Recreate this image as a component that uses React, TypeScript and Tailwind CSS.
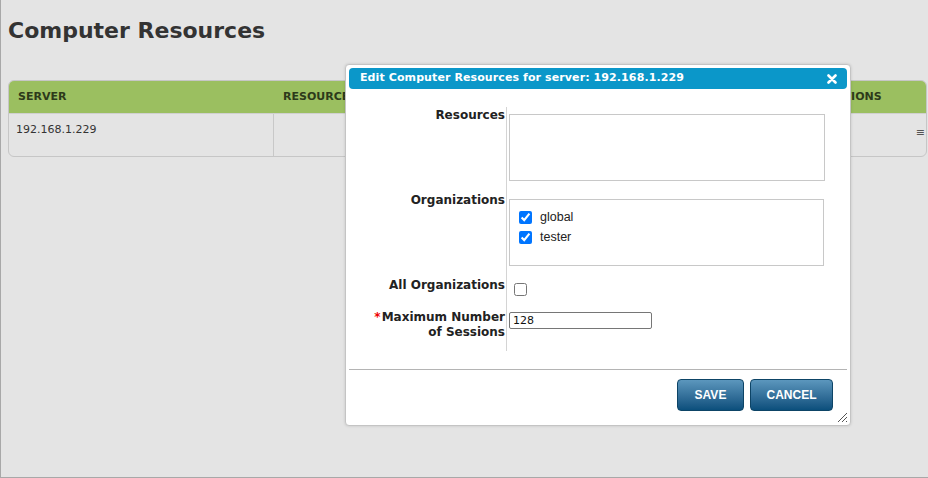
import React from "react";

const verdana = "font-['DejaVu_Sans',Verdana,sans-serif]";
const arial = "font-['Liberation_Sans',Arial,sans-serif]";

function CloseIcon() {
  return (
    <svg width="10" height="10" viewBox="0 0 10 10" className="block">
      <path d="M1.5 1.5 L8.5 8.5 M8.5 1.5 L1.5 8.5" stroke="#fff" strokeWidth="2.6" strokeLinecap="round" />
    </svg>
  );
}

function ResizeGrip() {
  return (
    <svg width="12" height="12" viewBox="0 0 12 12" className="block">
      <path d="M11 2 L2 11 M11 6 L6 11 M11 10 L10 11" stroke="#555" strokeWidth="1" />
    </svg>
  );
}

function FormRow({
  label,
  required,
  height,
  children,
}: {
  label: React.ReactNode;
  required?: boolean;
  height: string;
  children: React.ReactNode;
}) {
  return (
    <div className={`grid grid-cols-[160px_1fr] ${height}`}>
      <div className={`${verdana} text-right text-[12px] leading-[15px] font-bold text-[#222] pr-px pt-[1px]`}>
        {required && <span className="text-[#e00] mr-px">*</span>}
        {label}
      </div>
      <div className="border-l border-[#d4d4d4] pl-[2px]">{children}</div>
    </div>
  );
}

function EditDialog() {
  return (
    <div className="absolute left-[344px] top-[64px] w-[506px] h-[362px] bg-white border border-[#c4c4c4] rounded-[4px] p-[3px] shadow-[0_0_3px_rgba(0,0,0,0.15)] flex flex-col">
      <div className="h-[25px] bg-[#0b97c9] rounded-[4px] flex items-center pl-[11px] pr-[10px]">
        <span className={`${verdana} text-white text-[11px] tracking-[0.1px] font-bold flex-1`}>
          Edit Computer Resources for server: 192.168.1.229
        </span>
        <CloseIcon />
      </div>

      <div className="mt-[18px] -ml-[3px]">
        <FormRow label="Resources" height="h-[85px]">
          <div className="mt-[7px] w-[316px] h-[67px] border border-[#c8c8c8]" />
        </FormRow>
        <FormRow label="Organizations" height="h-[85px]">
          <div className="mt-[7px] w-[315px] h-[67px] border border-[#c8c8c8] pt-[7px] pl-[9px]">
            {["global", "tester"].map((o) => (
              <label key={o} className={`${arial} flex items-center h-[20px] text-[12.5px] text-[#222]`}>
                <input type="checkbox" defaultChecked className="w-[13px] h-[13px] m-0 accent-[#0075ff]" />
                <span className="ml-[8px]">{o}</span>
              </label>
            ))}
          </div>
        </FormRow>
        <FormRow label="All Organizations" height="h-[32px]">
          <input type="checkbox" className="mt-[6px] ml-[5px] w-[13px] h-[13px]" />
        </FormRow>
        <FormRow
          label={
            <>
              Maximum Number
              <br />
              of Sessions
            </>
          }
          required
          height="h-[42px]"
        >
          <div
            className={`${verdana} mt-[3px] w-[143px] h-[17px] border border-[#767676] rounded-[2px] text-[11px] leading-[15px] pl-[3px] text-[#111]`}
          >
            128
          </div>
        </FormRow>
      </div>

      <div className="mt-[18px] border-t border-[#b4b4b4]" />

      <div className="flex justify-end gap-[6px] mt-[9px] pr-[14px]">
        {[
          ["SAVE", "w-[67px]"],
          ["CANCEL", "w-[83px]"],
        ].map(([t, w]) => (
          <button
            key={t}
            className={`${arial} ${w} h-[32px] rounded-[4px] border border-[#0d4466] bg-gradient-to-b from-[#5c97bd] to-[#0a4f7c] text-white text-[12px] font-bold`}
          >
            {t}
          </button>
        ))}
      </div>

      <div className="flex justify-end mt-auto -mr-[1px] -mb-[1px]">
        <ResizeGrip />
      </div>
    </div>
  );
}

export default function App() {
  return (
    <div className="relative w-[928px] h-[478px] bg-[#e4e4e4] overflow-hidden border-l border-b border-[#a8a8a8]">
      <h1 className={`${verdana} pl-[7px] pt-[17px] text-[22px] leading-[28px] font-bold text-[#333]`}>
        Computer Resources
      </h1>

      <div className="ml-[7px] mt-[35px] w-[919px] rounded-[6px] border border-[#c6c6c6] overflow-hidden">
        <div className={`${verdana} h-[32px] bg-[#9bbf60] flex items-center text-[11px] font-bold text-[#2d3a1a]`}>
          <div className="w-[265px] pl-[9px]">SERVER</div>
          <div className="w-[543px] pl-[9px]">RESOURCES</div>
          <div className="flex-1 pl-[10px]">ACTIONS</div>
        </div>
        <div className={`${verdana} h-[43px] flex text-[11px] text-[#333] border-t border-[#d0d0d0]`}>
          <div className="w-[265px] pl-[7px] pt-[8px] border-r border-[#c8c8c8]">192.168.1.229</div>
          <div className="w-[543px]" />
          <div className="flex-1 flex justify-end pt-[11px] pr-[1px] text-[#555]">≡</div>
        </div>
      </div>

      <EditDialog />
    </div>
  );
}
